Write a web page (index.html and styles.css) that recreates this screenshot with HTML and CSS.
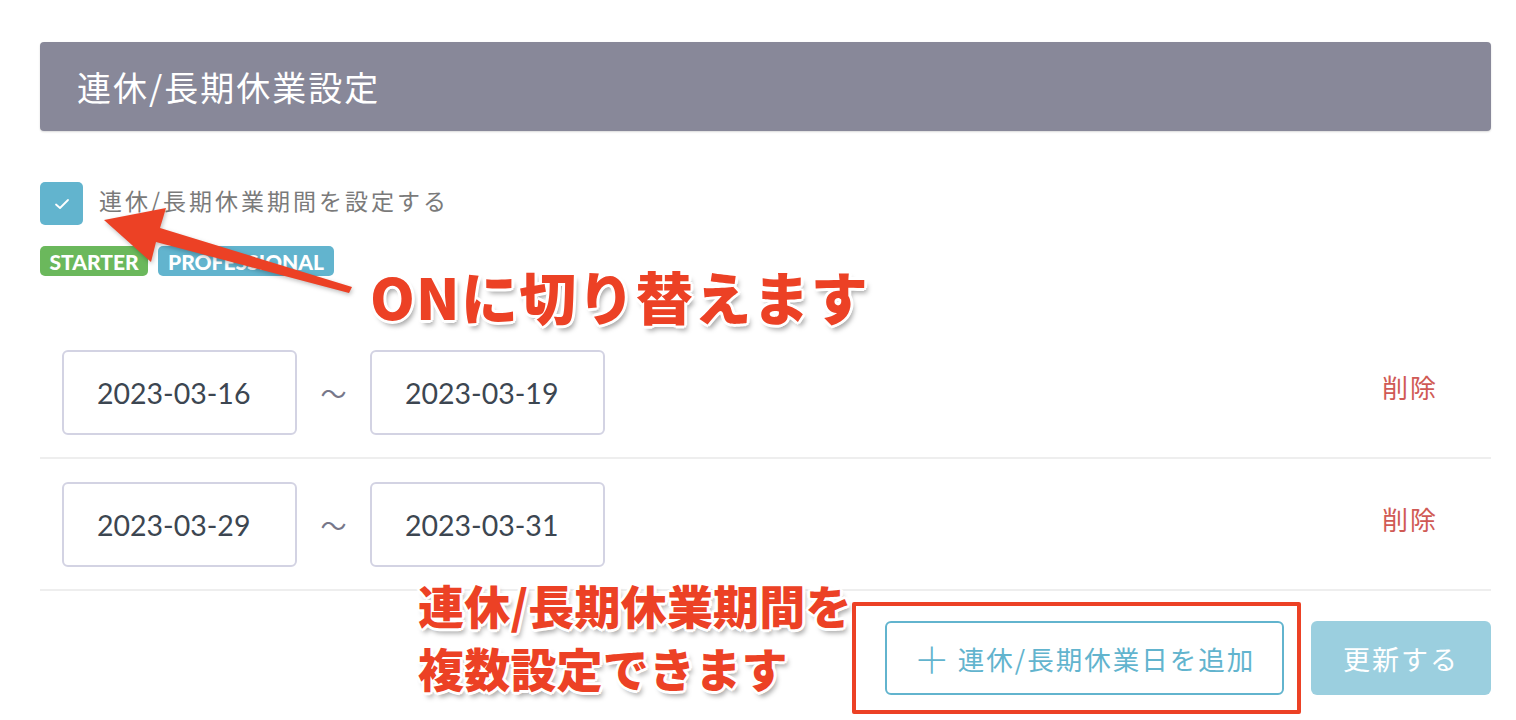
FILE: index.html
```html
<!DOCTYPE html>
<html lang="ja">
<head>
<meta charset="utf-8">
<title>連休/長期休業設定</title>
<link rel="stylesheet" href="styles.css">
</head>
<body>
<div class="page">
  <section class="panel">
    <header class="panel-head">
      <h2 class="panel-title">連休/長期休業設定</h2>
    </header>
    <div class="panel-body">
      <label class="check">
        <span class="check-box">
          <svg width="16" height="12" viewBox="0 0 16 12"><path d="M2 6.5 L6 10 L14 2" fill="none" stroke="#fff" stroke-width="1.8" stroke-linecap="round" stroke-linejoin="round"/></svg>
        </span>
        <span class="check-label">連休/長期休業期間を設定する</span>
      </label>
      <div class="badges">
        <span class="badge badge-green">STARTER</span>
        <span class="badge badge-blue">PROFESSIONAL</span>
      </div>
      <div class="rows">
        <div class="row">
          <div class="range">
            <div class="date-input">2023-03-16</div>
            <span class="tilde">〜</span>
            <div class="date-input">2023-03-19</div>
          </div>
          <span class="delete">削除</span>
        </div>
        <div class="row">
          <div class="range">
            <div class="date-input">2023-03-29</div>
            <span class="tilde">〜</span>
            <div class="date-input">2023-03-31</div>
          </div>
          <span class="delete">削除</span>
        </div>
      </div>
      <div class="actions">
        <button class="btn btn-outline"><span class="plus">＋</span>連休/長期休業日を追加</button>
        <button class="btn btn-primary">更新する</button>
      </div>
    </div>
  </section>

  <svg class="arrow" width="1516" height="720" viewBox="0 0 1516 720">
    <polygon points="104,220 166,208 160,228 352,287 349,293 156,242 151,262" fill="#ec4125"/>
  </svg>
  <div class="note note-on">ONに切り替えます</div>
  <div class="note note-multi">連休/長期休業期間を<br>複数設定できます</div>
  <div class="highlight-box"></div>
</div>
</body>
</html>
```

FILE: styles.css
```css
* { box-sizing: border-box; }
html, body { margin: 0; padding: 0; background: #fff; }
body {
  font-family: "Lato", "Noto Sans CJK JP", sans-serif;
  width: 1516px;
  height: 720px;
  overflow: hidden;
}
.page {
  position: relative;
  padding: 42px 25px 0 40px;
  height: 720px;
}
.panel-head {
  height: 89px;
  background: #888899;
  border-radius: 4px;
  box-shadow: 0 1px 2px rgba(0,0,0,0.15);
  display: flex;
  align-items: center;
  padding-left: 37px;
}
.panel-title {
  margin: 0;
  color: #fff;
  font-weight: 400;
  font-size: 34px;
  letter-spacing: 2px;
  font-family: "Noto Sans CJK JP", sans-serif;
}
.panel-body {
  padding-top: 51px;
}
.check {
  display: flex;
  align-items: center;
  gap: 16px;
}
.check-box {
  width: 43px;
  height: 43px;
  border-radius: 5px;
  background: #62b4ce;
  display: flex;
  align-items: center;
  justify-content: center;
}
.check-label {
  color: #7a7a7a;
  font-size: 23px;
  letter-spacing: 3px;
  font-family: "Noto Sans CJK JP", sans-serif;
  margin-top: -8px;
}
.badges {
  display: flex;
  gap: 10px;
  margin-top: 21px;
}
.badge {
  height: 30px;
  border-radius: 5px;
  color: #fff;
  font-weight: 900;
  font-size: 21px;
  display: flex;
  align-items: center;
  justify-content: center;
}
.badge-green { background: #6bb85c; width: 108px; }
.badge-blue { background: #62b4ce; width: 176px; }
.rows {
  margin-top: 51px;
}
.row {
  display: flex;
  align-items: center;
  justify-content: space-between;
  padding: 23px 53px 22px 22px;
  border-bottom: 2px solid #eeeeee;
}
.range {
  display: flex;
  align-items: center;
}
.date-input {
  width: 235px;
  height: 85px;
  border: 2px solid #d3d3e3;
  border-radius: 6px;
  display: flex;
  align-items: center;
  padding-left: 33px;
  font-size: 28.5px;
  color: #3c4651;
}
.tilde {
  width: 73px;
  text-align: center;
  color: #77778a;
  font-size: 26px;
  font-family: "Noto Sans CJK JP", sans-serif;
}
.delete {
  color: #d05a55;
  font-size: 26px;
  letter-spacing: 2px;
  font-family: "Noto Sans CJK JP", sans-serif;
  margin-top: -12px;
}
.actions {
  display: flex;
  justify-content: flex-end;
  gap: 27px;
  margin-top: 30px;
}
.btn {
  height: 74px;
  border-radius: 6px;
  font-family: "Noto Sans CJK JP", sans-serif;
  font-size: 26.5px;
  letter-spacing: 2px;
  display: flex;
  align-items: center;
  justify-content: center;
  cursor: pointer;
}
.btn-outline {
  width: 399px;
  background: #fff;
  border: 2px solid #62b4ce;
  color: #62b4ce;
}
.plus {
  font-size: 36px;
  margin-right: 8px;
  font-weight: 300;
  letter-spacing: 0;
}
.btn-primary {
  width: 180px;
  background: #9bcfdf;
  border: none;
  color: #fff;
  font-size: 27px;
  letter-spacing: 2px;
}
.arrow {
  position: absolute;
  left: 0;
  top: 0;
  pointer-events: none;
  filter: drop-shadow(1px 2px 2px rgba(0,0,0,0.25));
}
.note {
  position: absolute;
  color: #ec4125;
  font-family: "Noto Sans CJK JP", sans-serif;
  font-weight: 900;
  white-space: nowrap;
  text-shadow:
    3px 0 0 #fff, -3px 0 0 #fff, 0 3px 0 #fff, 0 -3px 0 #fff,
    2px 2px 0 #fff, -2px 2px 0 #fff, 2px -2px 0 #fff, -2px -2px 0 #fff,
    3px 5px 5px rgba(0,0,0,0.35);
}
.note-on {
  left: 370px;
  top: 255px;
  font-size: 57px;
  line-height: 80px;
  letter-spacing: 1.3px;
}
.note-multi {
  left: 418px;
  top: 573px;
  font-size: 46px;
  line-height: 63px;
  letter-spacing: 0.2px;
}
.highlight-box {
  position: absolute;
  left: 852px;
  top: 602px;
  width: 449px;
  height: 112px;
  border: 4px solid #ec4125;
  border-radius: 2px;
}
```
